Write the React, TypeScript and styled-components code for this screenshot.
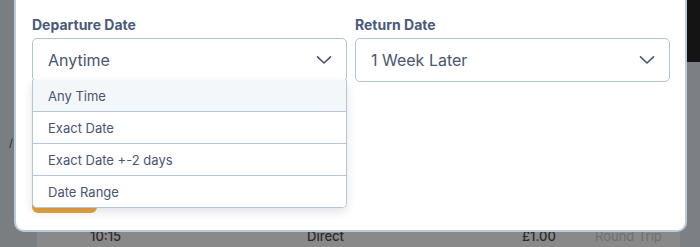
import styled, { createGlobalStyle } from "styled-components";

const GlobalStyle = createGlobalStyle`
  html, body {
    margin: 0;
    padding: 0;
  }
  body {
    font-family: Inter, "Noto Sans", "Liberation Sans", sans-serif;
    background: #898989;
  }
`;

const Screen = styled.div`
  position: relative;
  width: 700px;
  height: 247px;
  overflow: hidden;
  display: grid;
  grid-template-columns: 37px 1fr 20px;
  background: #898989;
`;

const SideStrip = styled.div`
  background: #7b7e81;
`;

const RightStrip = styled.div`
  display: flex;
  flex-direction: column;
  background: #7c8084;
`;

const DarkPatch = styled.div`
  height: 62px;
  margin-left: 7px;
  background: #141414;
`;

const BackPage = styled.div`
  display: flex;
  align-items: flex-end;
  padding-bottom: 3px;
`;

const BackRow = styled.div`
  display: flex;
  align-items: center;
  width: 100%;
  padding-left: 53px;
  font-size: 13px;
  color: #2b2b2b;
`;

const BackCell = styled.span<{ $w: number; $faded?: boolean }>`
  width: ${(p) => p.$w}px;
  flex-shrink: 0;
  color: ${(p) => (p.$faded ? "#6f6f6f" : "#2b2b2b")};
  font-weight: ${(p) => (p.$faded ? 400 : 500)};
`;

const Mark = styled.span`
  position: absolute;
  left: 9px;
  top: 136px;
  font-size: 11px;
  color: #2a2a2a;
`;

const Modal = styled.div`
  position: absolute;
  left: 14px;
  right: 13px;
  top: -20px;
  bottom: 15px;
  background: #ffffff;
  border: 2px solid #b9ccdb;
  border-radius: 10px;
  padding: 33px 14px 0 16px;
  box-sizing: border-box;
`;

const Fields = styled.div`
  display: grid;
  grid-template-columns: 315px 315px;
  column-gap: 8px;
`;

const Field = styled.div`
  display: flex;
  flex-direction: column;
  gap: 3px;
`;

const Label = styled.label`
  font-size: 14px;
  line-height: 20px;
  font-weight: 700;
  color: #4a5a78;
`;

const SelectWrap = styled.div`
  position: relative;
`;

const SelectBox = styled.div`
  height: 44px;
  box-sizing: border-box;
  border: 1px solid #afc4d6;
  border-radius: 5px;
  display: flex;
  align-items: center;
  justify-content: space-between;
  padding: 0 14px 0 15px;
  font-size: 16px;
  color: #4a5570;
  background: #fff;
`;

const Menu = styled.ul`
  position: absolute;
  left: 0;
  right: 0;
  top: 42px;
  margin: 0;
  padding: 0;
  list-style: none;
  background: #fff;
  border: 1px solid #b5c7d6;
  border-top: none;
  border-radius: 0 0 5px 5px;
  box-shadow: 0 4px 10px rgba(40, 60, 90, 0.14);
  z-index: 2;
  overflow: hidden;
`;

const MenuItem = styled.li<{ $active?: boolean }>`
  height: 32px;
  box-sizing: border-box;
  display: flex;
  align-items: center;
  padding-left: 15px;
  font-size: 13px;
  color: #4a5570;
  background: ${(p) => (p.$active ? "#f3f7fa" : "#fff")};
  & + & {
    border-top: 1px solid #b5c7d6;
  }
  &:first-child {
    height: 31px;
  }
`;

const SubmitButton = styled.button`
  margin-top: 97px;
  width: 65px;
  height: 34px;
  border: none;
  border-radius: 6px;
  background: #e8a23c;
`;

const Chevron = () => (
  <svg width="16" height="10" viewBox="0 0 16 10" fill="none">
    <path d="M1.5 1.8 L8 8 L14.5 1.8" stroke="#4a5570" strokeWidth="1.6" strokeLinecap="round" strokeLinejoin="round" />
  </svg>
);

const options = ["Any Time", "Exact Date", "Exact Date +-2 days", "Date Range"];

export default function App() {
  return (
    <>
      <GlobalStyle />
      <Screen>
        <SideStrip />
        <BackPage>
          <BackRow>
            <BackCell $w={217}>10:15</BackCell>
            <BackCell $w={215}>Direct</BackCell>
            <BackCell $w={73}>£1.00</BackCell>
            <BackCell $w={80} $faded>Round Trip</BackCell>
          </BackRow>
        </BackPage>
        <RightStrip>
          <DarkPatch />
        </RightStrip>
        <Mark>/</Mark>

        <Modal>
          <Fields>
            <Field>
              <Label>Departure Date</Label>
              <SelectWrap>
                <SelectBox>
                  Anytime
                  <Chevron />
                </SelectBox>
                <Menu>
                  {options.map((o, i) => (
                    <MenuItem key={o} $active={i === 0}>
                      {o}
                    </MenuItem>
                  ))}
                </Menu>
              </SelectWrap>
            </Field>
            <Field>
              <Label>Return Date</Label>
              <SelectWrap>
                <SelectBox>
                  1 Week Later
                  <Chevron />
                </SelectBox>
              </SelectWrap>
            </Field>
          </Fields>
          <SubmitButton aria-label="Search" />
        </Modal>
      </Screen>
    </>
  );
}
